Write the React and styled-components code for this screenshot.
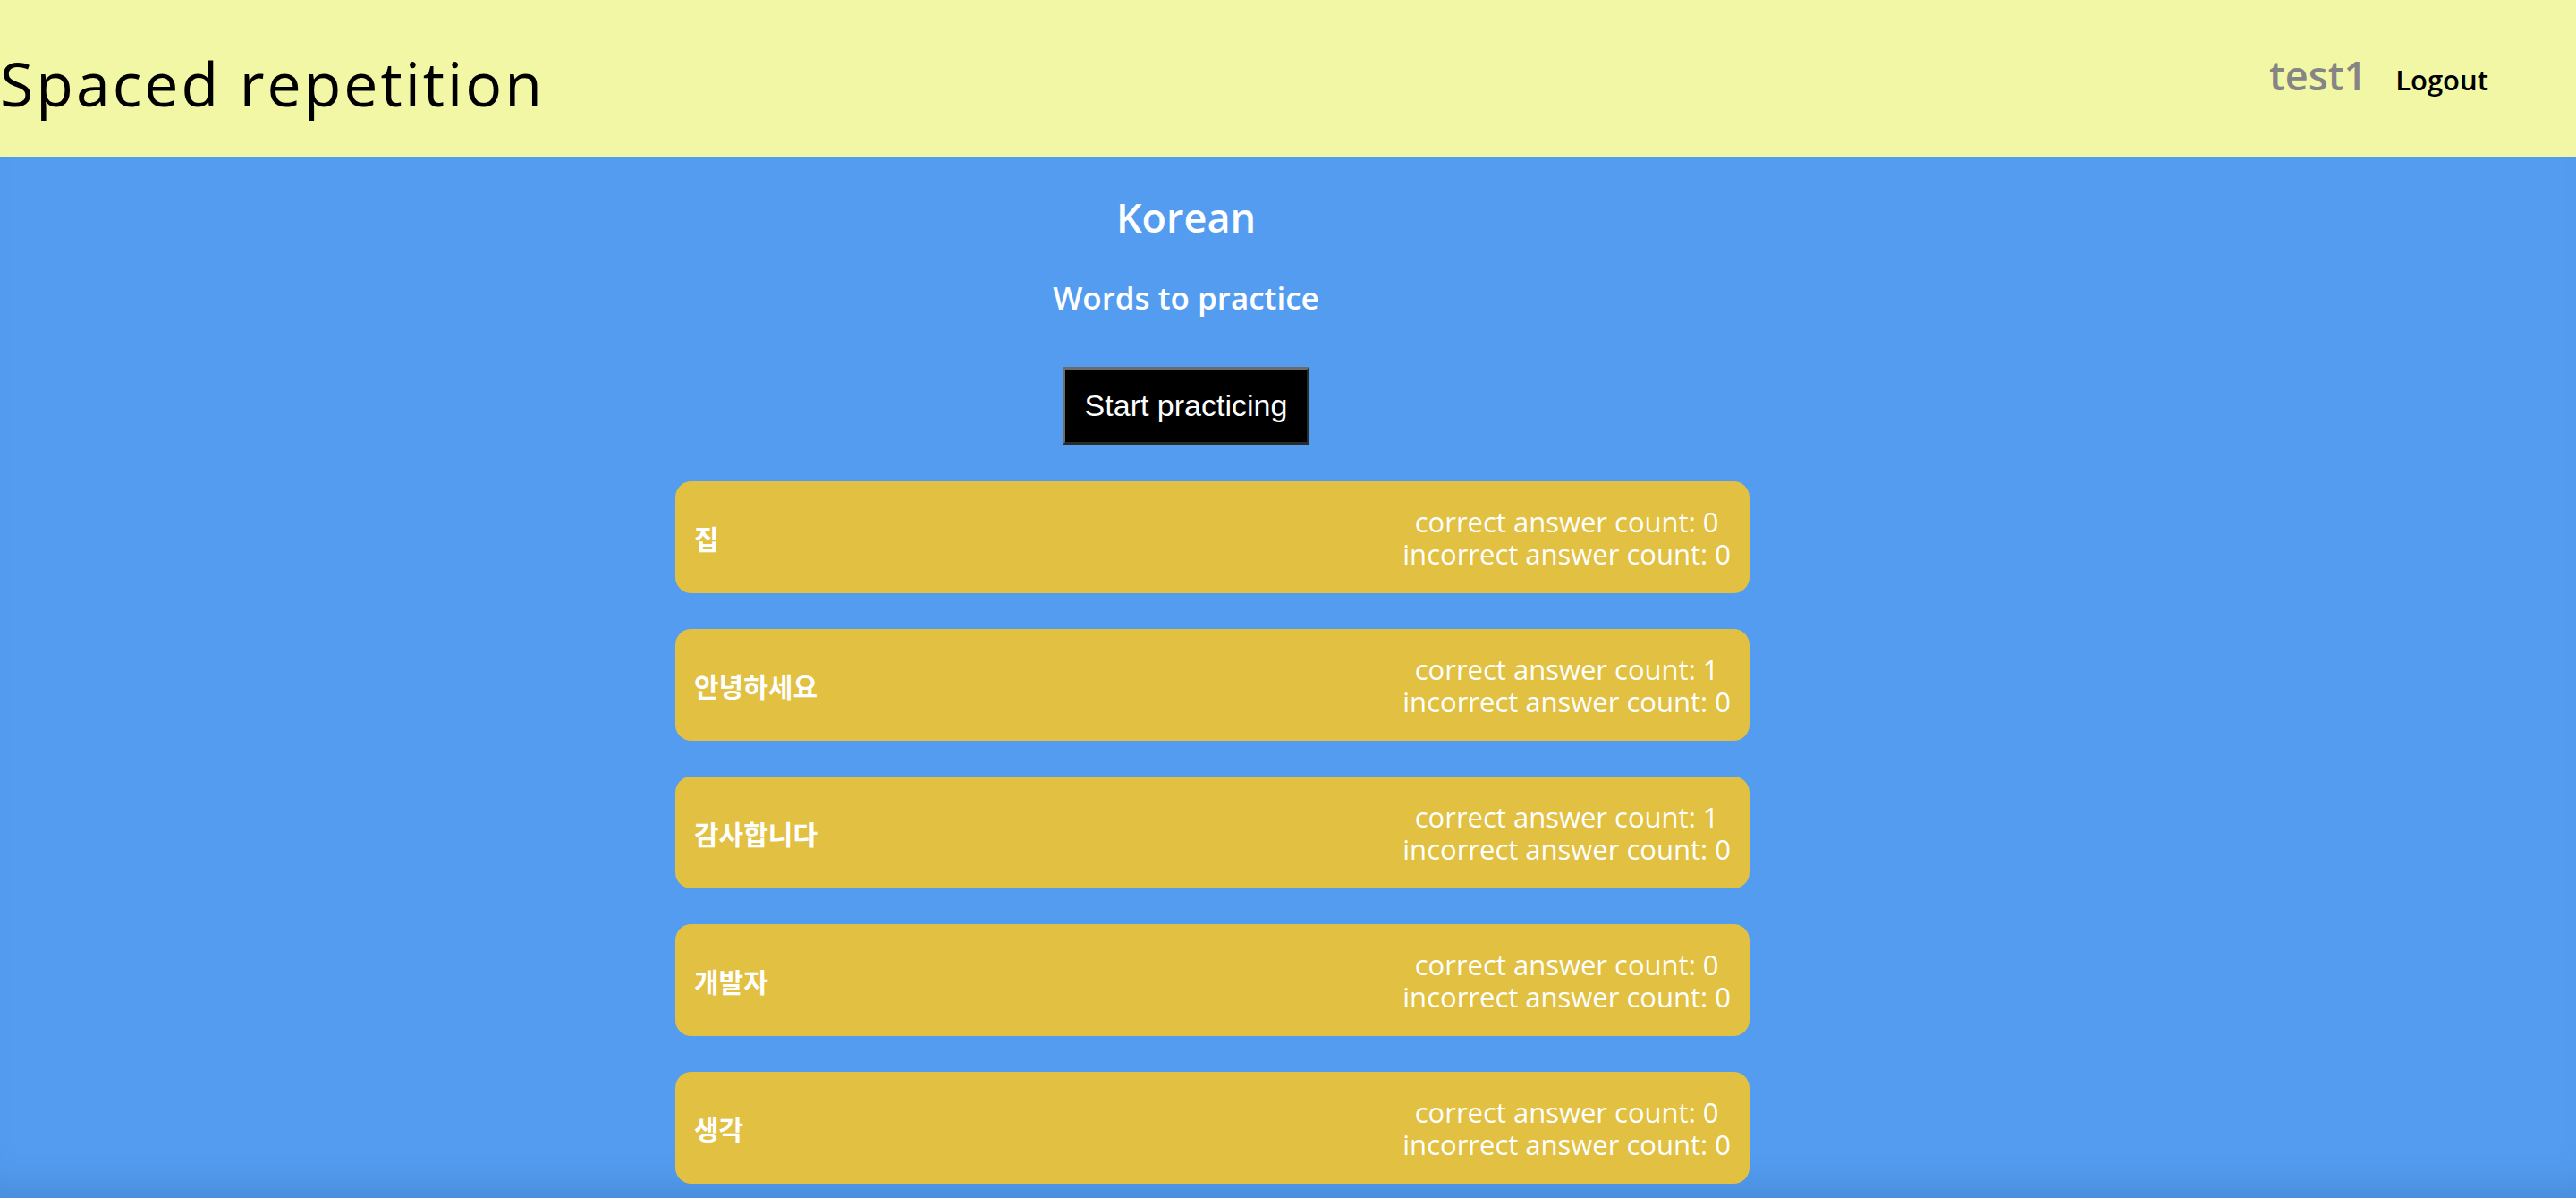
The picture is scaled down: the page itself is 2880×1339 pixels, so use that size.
import React from 'react';
import styled, { createGlobalStyle } from 'styled-components';

const GlobalStyle = createGlobalStyle`
    html, body {
        margin: 0;
        padding: 0;
        height: 100%;
    }
    body {
        font-family: "Open Sans", "Noto Sans CJK KR", sans-serif;
        background: #539cf0;
    }
    #root {
        min-height: 100vh;
    }
`;

const words = [
    { word: '집', correct: 0, incorrect: 0 },
    { word: '안녕하세요', correct: 1, incorrect: 0 },
    { word: '감사합니다', correct: 1, incorrect: 0 },
    { word: '개발자', correct: 0, incorrect: 0 },
    { word: '생각', correct: 0, incorrect: 0 },
];

export default function App() {
    return (
        <Page>
            <GlobalStyle />
            <Header>
                <Title>Spaced repetition</Title>
                <UserNav>
                    <UserName>test1</UserName>
                    <LogoutLink href="#">Logout</LogoutLink>
                </UserNav>
            </Header>
            <Main>
                <Content>
                    <Intro>
                        <LanguageTitle>Korean</LanguageTitle>
                        <SubTitle>Words to practice</SubTitle>
                        <StartButton>Start practicing</StartButton>
                    </Intro>
                    <WordList>
                        {words.map(w => (
                            <WordCard key={w.word}>
                                <Word>{w.word}</Word>
                                <Counts>
                                    <CountLine>correct answer count: {w.correct}</CountLine>
                                    <CountLine>incorrect answer count: {w.incorrect}</CountLine>
                                </Counts>
                            </WordCard>
                        ))}
                    </WordList>
                </Content>
            </Main>
        </Page>
    );
}

const Page = styled.div`
    display: flex;
    flex-direction: column;
    min-height: 100vh;
`;

const Header = styled.header`
    height: 175px;
    background: #f2f7a5;
    display: flex;
    align-items: center;
    justify-content: space-between;
    padding-right: 98px;
`;

const Title = styled.h1`
    margin: 10px 0 0 0;
    font-family: "Open Sans", sans-serif;
    font-weight: 500;
    font-size: 68px;
    letter-spacing: 3px;
    color: #000;
`;

const UserNav = styled.nav`
    display: flex;
    align-items: baseline;
    gap: 32px;
    margin-bottom: 8px;
`;

const UserName = styled.span`
    font-size: 45px;
    font-weight: 600;
    color: #858585;
`;

const LogoutLink = styled.a`
    font-size: 31px;
    font-weight: 600;
    color: #000;
    text-decoration: none;
`;

const Main = styled.main`
    flex: 1;
    background: #539cf0;
    box-shadow: inset 0 -40px 40px -30px rgba(40, 80, 140, 0.25);
`;

const Content = styled.div`
    margin-left: 755px;
    width: 1201px;
`;

const Intro = styled.div`
    width: 1142px;
    display: flex;
    flex-direction: column;
    align-items: center;
    color: #fff;
`;

const LanguageTitle = styled.h2`
    margin: 38px 0 0 0;
    font-size: 45px;
    font-weight: 600;
    line-height: 60px;
`;

const SubTitle = styled.h3`
    margin: 36px 0 0 0;
    font-size: 35px;
    font-weight: 600;
    line-height: 48px;
`;

const StartButton = styled.button`
    margin-top: 53px;
    height: 87px;
    padding: 0 22px;
    background: #000;
    color: #fff;
    border: 3px solid;
    border-color: #6b6b6b #2b2b2b #2b2b2b #6b6b6b;
    font-family: "Liberation Sans", Arial, sans-serif;
    font-size: 34px;
    white-space: nowrap;
`;

const WordList = styled.ul`
    list-style: none;
    margin: 41px 0 0 0;
    padding: 0;
    display: flex;
    flex-direction: column;
    gap: 40px;
`;

const WordCard = styled.li`
    height: 125px;
    box-sizing: border-box;
    background: #e2c041;
    border-radius: 18px;
    display: flex;
    align-items: center;
    justify-content: space-between;
    padding: 0 21px;
    color: #fff;
`;

const Word = styled.span`
    font-family: "Noto Sans CJK KR", sans-serif;
    font-weight: 700;
    font-size: 30px;
`;

const Counts = styled.div`
    text-align: center;
    font-size: 31px;
`;

const CountLine = styled.div`
    line-height: 36px;
`;
